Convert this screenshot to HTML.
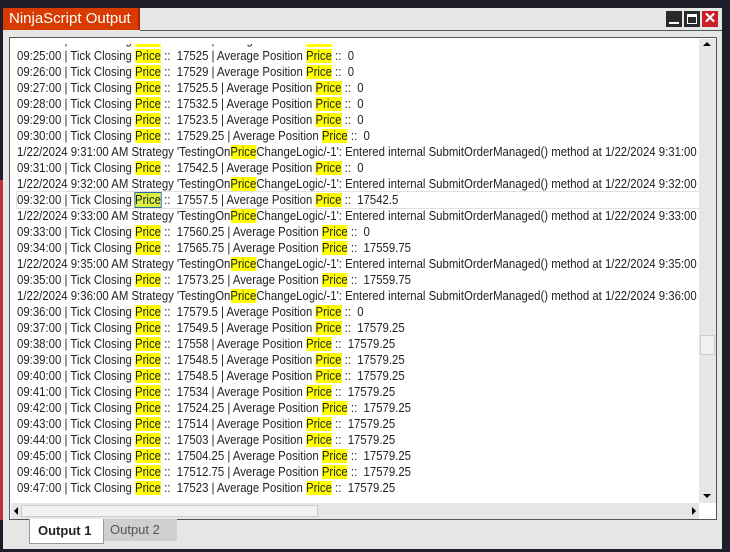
<!DOCTYPE html>
<html><head><meta charset="utf-8">
<style>
*{margin:0;padding:0;box-sizing:border-box}
body{width:730px;height:552px;background:#1d1e2a;position:relative;overflow:hidden;font-family:"Liberation Sans",sans-serif}
.redstrip{position:absolute;left:0;top:180px;width:4px;height:340px;background:#c0303a}
.win{position:absolute;left:3px;top:8px;width:719px;height:541px;background:#e6e6e6}
.title{position:absolute;left:0;top:0;width:137px;height:22px;background:#d83b01;color:#fff;font-size:15px;line-height:22px;padding-left:6px;border-right:2px solid #a02c00}
.tline{position:absolute;left:137px;top:22px;width:582px;height:1px;background:#555}
.btn{position:absolute;top:3px;width:16px;height:16px;background:#2a2a2a}
.b1{left:663px}.b2{left:681px}.b3{left:699px;background:#c8202a}
.box{position:absolute;left:6px;top:29px;width:708px;height:483px;border:1px solid #555;background:#fff}
.txt{position:absolute;left:1px;top:1px;width:688px;height:464px;overflow:hidden;background:#fff}
.lines{position:absolute;left:6px;top:-7px;transform:scaleX(0.91);transform-origin:0 0;white-space:nowrap;font-size:12.5px;color:#222}
.l{height:16px;line-height:16px;white-space:pre}
.h{background:#ffff00}
.sel{outline:1px solid #e0e0e0;width:800px}
.cur{outline:1px solid #2a6a9a;background:#d8f040}
.cover{position:absolute;left:0;top:0;width:688px;height:5px;background:#fff}
.vs{position:absolute;left:689px;top:1px;width:17px;height:464px;background:#e6e6e6}
.hs{position:absolute;left:1px;top:465px;width:688px;height:16px;background:#e6e6e6}
.thumbh{position:absolute;left:10px;top:2px;width:297px;height:12px;background:#f2f2f2;border:1px solid #ccc}
.thumbv{position:absolute;left:1px;top:296px;width:15px;height:20px;background:#f0f0f0;border:1px solid #ccc}
.tab1{position:absolute;left:26px;top:511px;width:75px;height:25px;background:#fff;border:1px solid #999;border-top:none;font-size:13px;font-weight:bold;line-height:24px;padding-left:8px;color:#222}
.tab2{position:absolute;left:101px;top:511px;width:73px;height:22px;background:#cfcfcf;font-size:13px;line-height:22px;padding-left:6px;color:#555}
</style></head><body>
<div class="redstrip"></div>
<div class="win">
<div class="title">NinjaScript Output</div>
<div class="tline"></div>
<div class="btn b1"><div style="position:absolute;left:3px;top:11px;width:10px;height:2px;background:#fff"></div></div>
<div class="btn b2"><div style="position:absolute;left:3px;top:3px;width:10px;height:10px;border:1px solid #fff;border-top-width:3px"></div></div>
<div class="btn b3"><div style="color:#fff;font-size:15px;font-weight:bold;line-height:16px;text-align:center">✕</div></div>
<div class="box">
<div class="txt"><div class="lines">
<div class="l">09:24:00 | Tick Closing <span class="h">Price</span> ::  17520 | Average Position <span class="h">Price</span> ::  0</div>
<div class="l">09:25:00 | Tick Closing <span class="h">Price</span> ::  17525 | Average Position <span class="h">Price</span> ::  0</div>
<div class="l">09:26:00 | Tick Closing <span class="h">Price</span> ::  17529 | Average Position <span class="h">Price</span> ::  0</div>
<div class="l">09:27:00 | Tick Closing <span class="h">Price</span> ::  17525.5 | Average Position <span class="h">Price</span> ::  0</div>
<div class="l">09:28:00 | Tick Closing <span class="h">Price</span> ::  17532.5 | Average Position <span class="h">Price</span> ::  0</div>
<div class="l">09:29:00 | Tick Closing <span class="h">Price</span> ::  17523.5 | Average Position <span class="h">Price</span> ::  0</div>
<div class="l">09:30:00 | Tick Closing <span class="h">Price</span> ::  17529.25 | Average Position <span class="h">Price</span> ::  0</div>
<div class="l">1/22/2024 9:31:00 AM Strategy 'TestingOn<span class="h">Price</span>ChangeLogic/-1': Entered internal SubmitOrderManaged() method at 1/22/2024 9:31:00 AM</div>
<div class="l">09:31:00 | Tick Closing <span class="h">Price</span> ::  17542.5 | Average Position <span class="h">Price</span> ::  0</div>
<div class="l">1/22/2024 9:32:00 AM Strategy 'TestingOn<span class="h">Price</span>ChangeLogic/-1': Entered internal SubmitOrderManaged() method at 1/22/2024 9:32:00 AM</div>
<div class="l sel">09:32:00 | Tick Closing <span class="cur">Price</span> ::  17557.5 | Average Position <span class="h">Price</span> ::  17542.5</div>
<div class="l">1/22/2024 9:33:00 AM Strategy 'TestingOn<span class="h">Price</span>ChangeLogic/-1': Entered internal SubmitOrderManaged() method at 1/22/2024 9:33:00 AM</div>
<div class="l">09:33:00 | Tick Closing <span class="h">Price</span> ::  17560.25 | Average Position <span class="h">Price</span> ::  0</div>
<div class="l">09:34:00 | Tick Closing <span class="h">Price</span> ::  17565.75 | Average Position <span class="h">Price</span> ::  17559.75</div>
<div class="l">1/22/2024 9:35:00 AM Strategy 'TestingOn<span class="h">Price</span>ChangeLogic/-1': Entered internal SubmitOrderManaged() method at 1/22/2024 9:35:00 AM</div>
<div class="l">09:35:00 | Tick Closing <span class="h">Price</span> ::  17573.25 | Average Position <span class="h">Price</span> ::  17559.75</div>
<div class="l">1/22/2024 9:36:00 AM Strategy 'TestingOn<span class="h">Price</span>ChangeLogic/-1': Entered internal SubmitOrderManaged() method at 1/22/2024 9:36:00 AM</div>
<div class="l">09:36:00 | Tick Closing <span class="h">Price</span> ::  17579.5 | Average Position <span class="h">Price</span> ::  0</div>
<div class="l">09:37:00 | Tick Closing <span class="h">Price</span> ::  17549.5 | Average Position <span class="h">Price</span> ::  17579.25</div>
<div class="l">09:38:00 | Tick Closing <span class="h">Price</span> ::  17558 | Average Position <span class="h">Price</span> ::  17579.25</div>
<div class="l">09:39:00 | Tick Closing <span class="h">Price</span> ::  17548.5 | Average Position <span class="h">Price</span> ::  17579.25</div>
<div class="l">09:40:00 | Tick Closing <span class="h">Price</span> ::  17548.5 | Average Position <span class="h">Price</span> ::  17579.25</div>
<div class="l">09:41:00 | Tick Closing <span class="h">Price</span> ::  17534 | Average Position <span class="h">Price</span> ::  17579.25</div>
<div class="l">09:42:00 | Tick Closing <span class="h">Price</span> ::  17524.25 | Average Position <span class="h">Price</span> ::  17579.25</div>
<div class="l">09:43:00 | Tick Closing <span class="h">Price</span> ::  17514 | Average Position <span class="h">Price</span> ::  17579.25</div>
<div class="l">09:44:00 | Tick Closing <span class="h">Price</span> ::  17503 | Average Position <span class="h">Price</span> ::  17579.25</div>
<div class="l">09:45:00 | Tick Closing <span class="h">Price</span> ::  17504.25 | Average Position <span class="h">Price</span> ::  17579.25</div>
<div class="l">09:46:00 | Tick Closing <span class="h">Price</span> ::  17512.75 | Average Position <span class="h">Price</span> ::  17579.25</div>
<div class="l">09:47:00 | Tick Closing <span class="h">Price</span> ::  17523 | Average Position <span class="h">Price</span> ::  17579.25</div>
</div><div class="cover"></div></div>
<div class="vs">
<div style="position:absolute;left:4px;top:3px;width:0;height:0;border-left:4px solid transparent;border-right:4px solid transparent;border-bottom:4px solid #000"></div>
<div class="thumbv"></div>
<div style="position:absolute;left:4px;top:455px;width:0;height:0;border-left:4px solid transparent;border-right:4px solid transparent;border-top:4px solid #000"></div>
</div>
<div class="hs">
<div style="position:absolute;left:3px;top:4px;width:0;height:0;border-top:4px solid transparent;border-bottom:4px solid transparent;border-right:4px solid #000"></div>
<div class="thumbh"></div>
<div style="position:absolute;left:681px;top:4px;width:0;height:0;border-top:4px solid transparent;border-bottom:4px solid transparent;border-left:4px solid #000"></div>
</div>
</div>
<div class="tab2">Output 2</div>
<div class="tab1">Output 1</div>
</div>
</body></html>
